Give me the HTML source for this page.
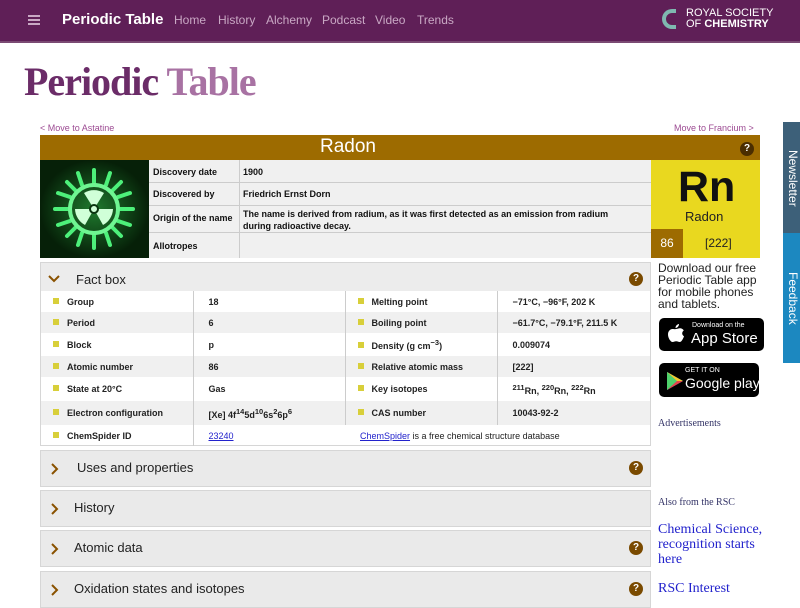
<!DOCTYPE html>
<html><head><meta charset="utf-8"><style>
*{margin:0;padding:0;box-sizing:border-box}
body{width:800px;height:600px;overflow:hidden;background:#fff;font-family:"Liberation Sans",sans-serif;position:relative}
.a{position:absolute}
.hdr{left:0;top:0;width:800px;height:43px;background:#5f1f57;border-bottom:2px solid #7a4a73}
.nav{top:13px;font-size:12px;color:#c9a8c4}
.lbl{font-weight:bold;font-size:9px;color:#111}
.fb td{font-size:9px;font-weight:bold;color:#222}
.sq{display:inline-block;width:6px;height:6px;background:#d8cf3a;margin:0 8px 0 12px;vertical-align:1px}
.acc{left:40px;width:611px;background:#eaeaea;border:1px solid #d6d6d6}
.acc span{position:absolute;top:9px;font-size:13px;color:#222}
.chev{position:absolute;left:10px;top:12px}
.q{position:absolute;width:14px;height:14px;border-radius:7px;background:#7a4a00;color:#fff;font-size:10px;font-weight:bold;text-align:center;line-height:14px}
</style></head><body>
<div class="a hdr"></div>
<div class="a" style="left:28px;top:15px;width:12px;height:2px;background:#c9a8c4;box-shadow:0 4px 0 #c9a8c4,0 8px 0 #c9a8c4"></div>
<div class="a" style="left:62px;top:11px;font-size:15px;font-weight:bold;color:#fff">Periodic Table</div>
<div class="a nav" style="left:174px">Home</div>
<div class="a nav" style="left:218px">History</div>
<div class="a nav" style="left:266px">Alchemy</div>
<div class="a nav" style="left:322px">Podcast</div>
<div class="a nav" style="left:375px">Video</div>
<div class="a nav" style="left:417px">Trends</div>
<div class="a" style="left:662px;top:9px;width:14px;height:20px;border:4px solid #7fb8b0;border-right:none;border-radius:10px 0 0 10px"></div>
<div class="a" style="left:686px;top:8px;font-size:11px;color:#fff;line-height:11px">ROYAL SOCIETY<br>OF <b>CHEMISTRY</b></div>
<div class="a" style="left:24px;top:58px;font-family:'Liberation Serif',serif;font-weight:bold;font-size:40px;color:#6b2c68;letter-spacing:-1px">Periodic <span style="color:#a872a3">Table</span></div>
<div class="a" style="left:40px;top:123px;font-size:9px;color:#9c4a92">&lt; Move to Astatine</div>
<div class="a" style="left:674px;top:123px;font-size:9px;color:#9c4a92">Move to Francium &gt;</div>
<div class="a" style="left:40px;top:135px;width:720px;height:25px;background:#9d6b00"></div>
<div class="a" style="left:320px;top:136px;font-size:19px;color:#fff">Radon</div>
<div class="q" style="left:740px;top:142px;background:#4a2d00">?</div>
<svg class="a" style="left:40px;top:160px" width="109" height="98" viewBox="0 0 109 98">
<rect width="109" height="98" fill="#0a3410"/>
<rect width="109" height="98" fill="url(#g)"/>
<defs><radialGradient id="g"><stop offset="0" stop-color="#1f7a2e"/><stop offset="1" stop-color="#062008"/></radialGradient></defs>
<g stroke="#4df07a" stroke-width="4" stroke-linecap="round">
<line x1="54" y1="10" x2="54" y2="24"/><line x1="54" y1="74" x2="54" y2="88"/>
<line x1="15" y1="49" x2="29" y2="49"/><line x1="79" y1="49" x2="93" y2="49"/>
<line x1="27" y1="22" x2="36" y2="31"/><line x1="72" y1="67" x2="81" y2="76"/>
<line x1="81" y1="22" x2="72" y2="31"/><line x1="36" y1="67" x2="27" y2="76"/>
<line x1="38" y1="13" x2="42" y2="25"/><line x1="70" y1="13" x2="66" y2="25"/>
<line x1="38" y1="85" x2="42" y2="73"/><line x1="70" y1="85" x2="66" y2="73"/>
<line x1="18" y1="33" x2="30" y2="37"/><line x1="90" y1="33" x2="78" y2="37"/>
<line x1="18" y1="65" x2="30" y2="61"/><line x1="90" y1="65" x2="78" y2="61"/>
</g>
<circle cx="54" cy="49" r="24" fill="none" stroke="#6ff592" stroke-width="4"/>
<g fill="#d0ffd8"><path d="M54 49 L44 33 A19 19 0 0 1 64 33 Z"/><path d="M54 49 L73 49 A19 19 0 0 1 63 65 Z"/><path d="M54 49 L45 65 A19 19 0 0 1 35 49 Z"/></g>
<circle cx="54" cy="49" r="4" fill="#d0ffd8" stroke="#0a3410" stroke-width="2"/>
</svg>
<div class="a" style="left:149px;top:160px;width:502px;height:98px;background:#f0f0f0"></div>
<div class="a" style="left:149px;top:182px;width:502px;height:1px;background:#ccc"></div>
<div class="a" style="left:149px;top:205px;width:502px;height:1px;background:#ccc"></div>
<div class="a" style="left:149px;top:232px;width:502px;height:1px;background:#ccc"></div>
<div class="a" style="left:239px;top:160px;width:1px;height:98px;background:#ccc"></div>
<div class="a lbl" style="left:153px;top:167px">Discovery date</div>
<div class="a lbl" style="left:153px;top:189px">Discovered by</div>
<div class="a lbl" style="left:153px;top:213px">Origin of the name</div>
<div class="a lbl" style="left:153px;top:241px">Allotropes</div>
<div class="a lbl" style="left:243px;top:167px">1900</div>
<div class="a lbl" style="left:243px;top:189px">Friedrich Ernst Dorn</div>
<div class="a lbl" style="left:243px;top:208px;line-height:12px">The name is derived from radium, as it was first detected as an emission from radium<br>during radioactive decay.</div>
<div class="a" style="left:651px;top:160px;width:109px;height:98px;background:#e9d81f"></div>
<div class="a" style="left:678px;top:163px;font-size:43px;font-weight:bold;color:#111">Rn</div>
<div class="a" style="left:685px;top:209px;font-size:13px;color:#222">Radon</div>
<div class="a" style="left:651px;top:229px;width:32px;height:29px;background:#9d6b00;color:#fff;font-size:12px;text-align:center;line-height:29px">86</div>
<div class="a" style="left:705px;top:236px;font-size:12px;color:#222">[222]</div>
<div class="a" style="left:40px;top:262px;width:611px;height:184px;border:1px solid #d6d6d6;background:#fff">
<div style="height:28px;background:#ececec"></div>
<table class="fb" style="border-collapse:collapse;width:609px">
<colgroup><col style="width:152px"><col style="width:152px"><col style="width:152px"><col></colgroup>
<tr style="height:21px"><td style="border-right:1px solid #ccc"><span class="sq"></span>Group</td><td style="border-right:1px solid #ccc;padding-left:15px">18</td><td style="border-right:1px solid #ccc"><span class="sq"></span>Melting point</td><td style="padding-left:15px">−71°C, −96°F, 202 K</td></tr>
<tr style="height:21px;background:#f0f0f0"><td style="border-right:1px solid #ccc"><span class="sq"></span>Period</td><td style="border-right:1px solid #ccc;padding-left:15px">6</td><td style="border-right:1px solid #ccc"><span class="sq"></span>Boiling point</td><td style="padding-left:15px">−61.7°C, −79.1°F, 211.5 K</td></tr>
<tr style="height:23px"><td style="border-right:1px solid #ccc"><span class="sq"></span>Block</td><td style="border-right:1px solid #ccc;padding-left:15px">p</td><td style="border-right:1px solid #ccc"><span class="sq"></span>Density (g cm<sup>−3</sup>)</td><td style="padding-left:15px">0.009074</td></tr>
<tr style="height:21px;background:#f0f0f0"><td style="border-right:1px solid #ccc"><span class="sq"></span>Atomic number</td><td style="border-right:1px solid #ccc;padding-left:15px">86</td><td style="border-right:1px solid #ccc"><span class="sq"></span>Relative atomic mass</td><td style="padding-left:15px">[222]</td></tr>
<tr style="height:24px"><td style="border-right:1px solid #ccc"><span class="sq"></span>State at 20°C</td><td style="border-right:1px solid #ccc;padding-left:15px">Gas</td><td style="border-right:1px solid #ccc"><span class="sq"></span>Key isotopes</td><td style="padding-left:15px"><sup>211</sup>Rn, <sup>220</sup>Rn, <sup>222</sup>Rn</td></tr>
<tr style="height:24px;background:#f0f0f0"><td style="border-right:1px solid #ccc"><span class="sq"></span>Electron configuration</td><td style="border-right:1px solid #ccc;padding-left:15px">[Xe] 4f<sup>14</sup>5d<sup>10</sup>6s<sup>2</sup>6p<sup>6</sup></td><td style="border-right:1px solid #ccc"><span class="sq"></span>CAS number</td><td style="padding-left:15px">10043-92-2</td></tr>
<tr style="height:21px"><td style="border-right:1px solid #ccc"><span class="sq"></span>ChemSpider ID</td><td style="padding-left:15px;font-weight:normal"><u style="color:#22c">23240</u></td><td colspan="2" style="font-weight:normal;padding-left:15px"><u style="color:#22c">ChemSpider</u> is a free chemical structure database</td></tr>
</table></div>
<svg class="a" style="left:48px;top:275px" width="12" height="8"><path d="M1 1 L6 6 L11 1" fill="none" stroke="#8a5200" stroke-width="2"/></svg>
<div class="a" style="left:76px;top:272px;font-size:13px;color:#222">Fact box</div>
<div class="q" style="left:629px;top:272px">?</div>
<div class="a acc" style="top:450px;height:37px"><svg class="chev" width="8" height="12"><path d="M1 1 L6 6 L1 11" fill="none" stroke="#8a5200" stroke-width="2"/></svg><span style="left:36px">Uses and properties</span><div class="q" style="left:588px;top:10px">?</div></div>
<div class="a acc" style="top:490px;height:37px"><svg class="chev" width="8" height="12"><path d="M1 1 L6 6 L1 11" fill="none" stroke="#8a5200" stroke-width="2"/></svg><span style="left:33px">History</span></div>
<div class="a acc" style="top:530px;height:37px"><svg class="chev" width="8" height="12"><path d="M1 1 L6 6 L1 11" fill="none" stroke="#8a5200" stroke-width="2"/></svg><span style="left:33px">Atomic data</span><div class="q" style="left:588px;top:10px">?</div></div>
<div class="a acc" style="top:571px;height:37px"><svg class="chev" width="8" height="12"><path d="M1 1 L6 6 L1 11" fill="none" stroke="#8a5200" stroke-width="2"/></svg><span style="left:33px">Oxidation states and isotopes</span><div class="q" style="left:588px;top:10px">?</div></div>
<div class="a" style="left:658px;top:262px;font-size:12px;line-height:12px;color:#222">Download our free<br>Periodic Table app<br>for mobile phones<br>and tablets.</div>
<div class="a" style="left:659px;top:318px;width:105px;height:33px;background:#000;border-radius:5px;color:#fff">
<svg class="a" style="left:8px;top:6px" width="18" height="21" viewBox="0 0 18 21"><path d="M12 0 C12 2 10.5 4 8.5 4 C8.5 2 10 0.3 12 0 Z M9 5 C10.5 5 11.5 4.3 13 4.3 C14.5 4.3 16 5.2 16.8 6.5 C14.8 7.7 14.5 10.8 17 12.2 C16.2 14.6 14.5 18 12.7 18 C11.3 18 10.8 17.2 9.2 17.2 C7.5 17.2 7 18 5.6 18 C3.6 18 1 14 1 10.5 C1 7 3.3 5 5.5 5 C7 5 8 5.5 9 5 Z" fill="#fff"/></svg>
<div class="a" style="left:33px;top:4px;font-size:7px">Download on the</div>
<div class="a" style="left:32px;top:12px;font-size:15px">App Store</div></div>
<div class="a" style="left:659px;top:363px;width:100px;height:34px;background:#000;border-radius:5px;color:#fff">
<svg class="a" style="left:8px;top:9px" width="16" height="18" viewBox="0 0 16 18"><path d="M0 0 L16 9 L0 18 Z" fill="#2bb6d8"/><path d="M0 0 L10 9 L0 18 Z" fill="#4fd16b"/><path d="M10 9 L16 9 L0 18 Z" fill="#e8404a"/><path d="M0 0 L16 9 L10 9 Z" fill="#f6c62a"/></svg>
<div class="a" style="left:26px;top:4px;font-size:7px">GET IT ON</div>
<div class="a" style="left:26px;top:12px;font-size:14px;white-space:nowrap">Google play</div></div>
<div class="a" style="left:658px;top:418px;font-family:'Liberation Serif',serif;font-size:10px;color:#336">Advertisements</div>
<div class="a" style="left:658px;top:497px;font-family:'Liberation Serif',serif;font-size:10px;color:#336">Also from the RSC</div>
<div class="a" style="left:658px;top:522px;font-family:'Liberation Serif',serif;font-size:14px;line-height:15px;color:#22c">Chemical Science,<br>recognition starts<br>here</div>
<div class="a" style="left:658px;top:581px;font-family:'Liberation Serif',serif;font-size:14px;color:#22c">RSC Interest</div>
<div class="a" style="left:783px;top:122px;width:17px;height:111px;background:#3d6079"></div>
<div class="a" style="left:783px;top:233px;width:17px;height:130px;background:#1c88c0"></div>
<div class="a" style="left:786px;top:150px;writing-mode:vertical-rl;color:#fff;font-size:12px">Newsletter</div>
<div class="a" style="left:786px;top:272px;writing-mode:vertical-rl;color:#fff;font-size:12px">Feedback</div>
</body></html>
